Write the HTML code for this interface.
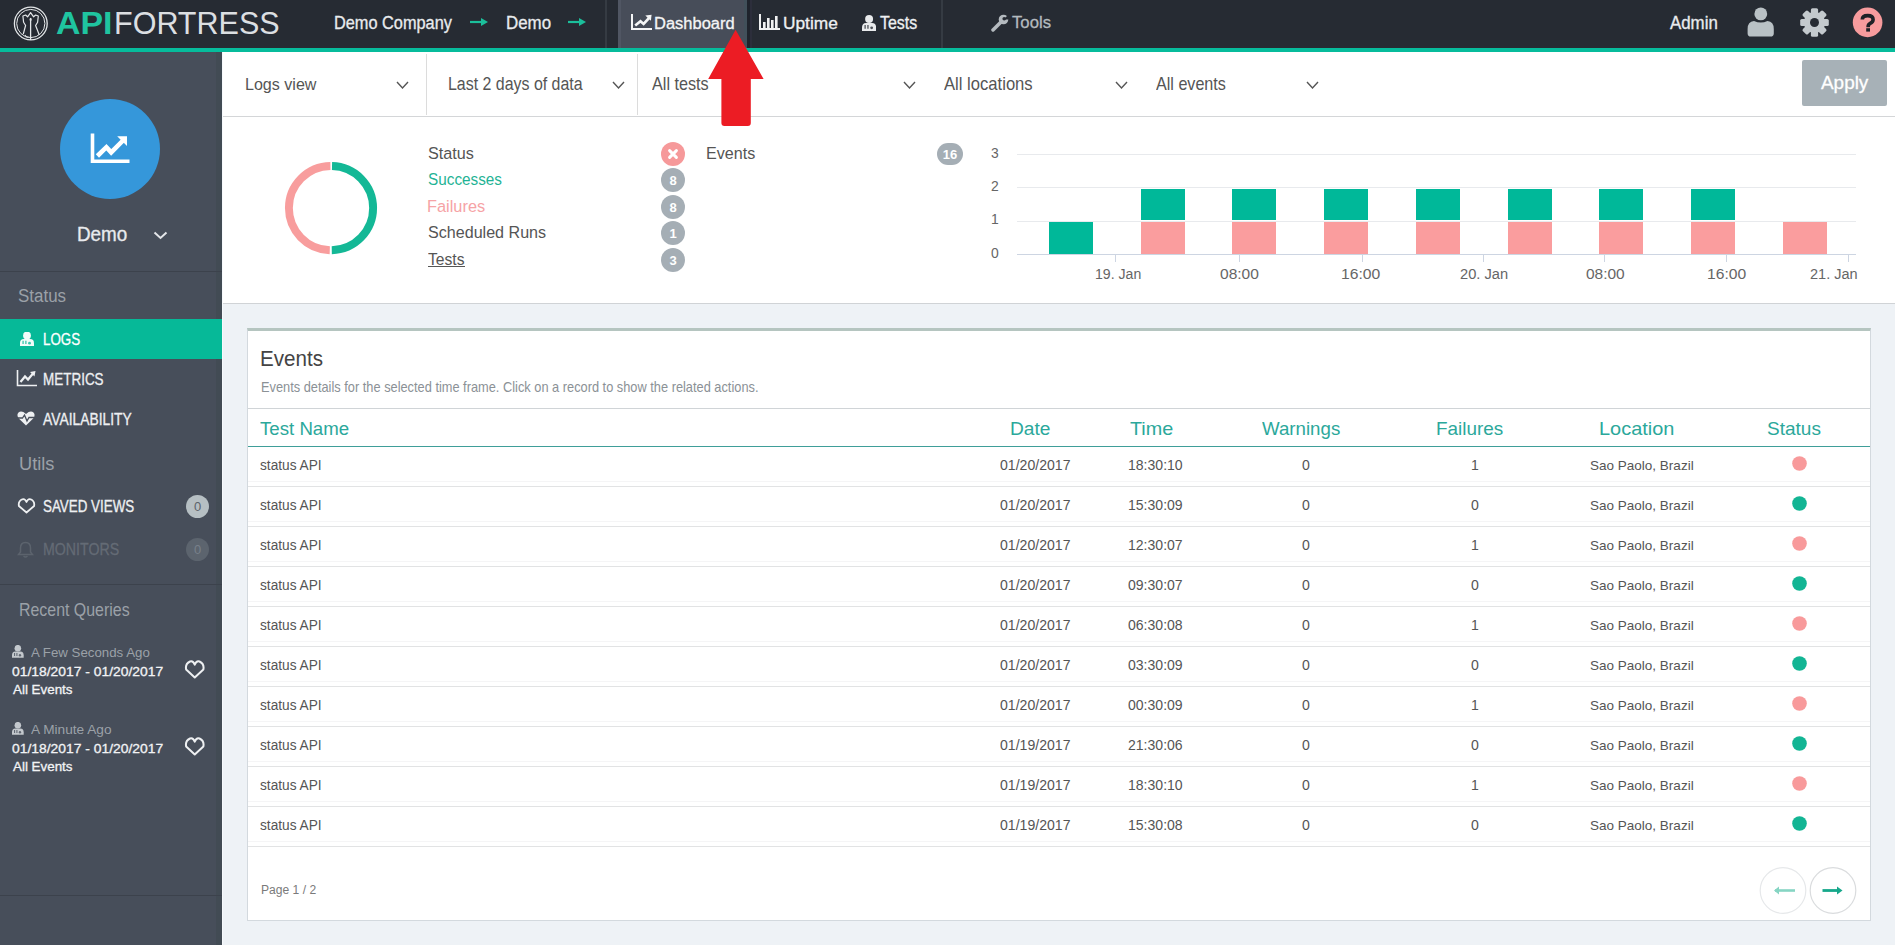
<!DOCTYPE html>
<html><head><meta charset="utf-8">
<style>
*{box-sizing:border-box;margin:0;padding:0}
html,body{width:1895px;height:945px;overflow:hidden;background:#eef2f6;font-family:"Liberation Sans",sans-serif;color:#555}
.a{position:absolute;white-space:nowrap}
.b{position:absolute;display:block}
</style></head><body>
<div class="b" style="left:0px;top:0px;width:1895px;height:48px;background:#262b33;"></div>
<div class="b" style="left:0px;top:48px;width:1895px;height:4.5px;background:#06bc9c;"></div>
<div class="b" style="left:0px;top:52px;width:222px;height:893px;background:#474e5a;"></div>
<div class="b" style="left:222px;top:52px;width:1673px;height:64px;background:#fff;"></div>
<div class="b" style="left:222px;top:116px;width:1673px;height:1px;background:#d4d6d8;"></div>
<div class="b" style="left:222px;top:117px;width:1673px;height:186px;background:#fff;"></div>
<div class="b" style="left:222px;top:303px;width:1673px;height:1px;background:#d0d3d6;"></div>
<svg class="b" style="left:12px;top:5px;" width="38" height="38" viewBox="0 0 38 38"><circle cx="18.8" cy="18.5" r="16.4" fill="none" stroke="#e3e6e8" stroke-width="1.3"/><circle cx="18.8" cy="18.5" r="14.1" fill="none" stroke="#e3e6e8" stroke-width="1"/><path d="M11.3 29 L13.6 20.5 L11.6 17.2 L10.9 11 L13.6 10 L15.6 11.8 L18.6 7.6 L21.6 11.8 L23.6 10 L26.3 11 L25.6 17.2 L23.6 20.5 L27.3 30" fill="none" stroke="#e3e6e8" stroke-width="1.2" stroke-linejoin="round"/><path d="M18.6 13.5 L18.6 35" stroke="#e3e6e8" stroke-width="1.3"/><ellipse cx="18.6" cy="14.4" rx="1" ry="1.6" fill="#e3e6e8"/><path d="M13 30 Q15 33 16.5 32" fill="none" stroke="#e3e6e8" stroke-width="1.1"/></svg>
<div class="a" style="left:55.75px;top:8.40px;font-size:31.01px;line-height:31.01px;color:#1fc4a0;transform:scaleX(1.0932);transform-origin:0 0;font-weight:700;">API</div>
<div class="a" style="left:113.56px;top:8.40px;font-size:30.57px;line-height:30.57px;color:#dcdfe2;transform:scaleX(0.9986);transform-origin:0 0;">FORTRESS</div>
<div class="a" style="left:333.69px;top:15.20px;font-size:17.86px;line-height:17.86px;color:#e9ebee;transform:scaleX(0.9137);transform-origin:0 0;-webkit-text-stroke:0.3px #e9ebee;">Demo Company</div>
<svg class="b" style="left:470px;top:17px;" width="20" height="10" viewBox="0 0 20 10"><path d="M0 5 L13 5" stroke="#1bbf9b" stroke-width="2.2"/><path d="M11 1 L18 5 L11 9 Z" fill="#1bbf9b"/></svg>
<div class="a" style="left:505.65px;top:14.20px;font-size:18.12px;line-height:18.12px;color:#e9ebee;transform:scaleX(0.9327);transform-origin:0 0;-webkit-text-stroke:0.3px #e9ebee;">Demo</div>
<svg class="b" style="left:568px;top:17px;" width="20" height="10" viewBox="0 0 20 10"><path d="M0 5 L13 5" stroke="#1bbf9b" stroke-width="2.2"/><path d="M11 1 L18 5 L11 9 Z" fill="#1bbf9b"/></svg>
<div class="b" style="left:605px;top:0px;width:2px;height:48px;background:#353b43;"></div>
<div class="b" style="left:618px;top:0px;width:126px;height:48px;background:#474d59;"></div>
<div class="b" style="left:618px;top:0px;width:3px;height:48px;background:#505663;"></div>
<div class="b" style="left:744px;top:0px;width:3px;height:48px;background:#41505a;"></div>
<div class="b" style="left:747px;top:0px;width:3px;height:48px;background:#1f242d;"></div>
<div class="b" style="left:750px;top:0px;width:2px;height:48px;background:#2c2e3b;"></div>
<svg class="b" style="left:631px;top:14px;" width="21" height="16" viewBox="0 0 21 16"><path d="M1 0 L1 15 L21 15" fill="none" stroke="#f4f5f6" stroke-width="2"/><path d="M4.2 11.5 L9.5 7.2 L12.6 9.9 L18.5 3.5" fill="none" stroke="#f4f5f6" stroke-width="2.6"/><path d="M14.3 1.6 L20.6 0.8 L19.9 6.7 Z" fill="#f4f5f6"/></svg>
<div class="a" style="left:654.38px;top:14.80px;font-size:16.41px;line-height:16.41px;color:#f4f5f6;transform:scaleX(1.0053);transform-origin:0 0;-webkit-text-stroke:0.3px #f4f5f6;">Dashboard</div>
<svg class="b" style="left:759px;top:14px;" width="21" height="16" viewBox="0 0 21 16"><path d="M1 0 L1 15 L21 15" fill="none" stroke="#f0f1f2" stroke-width="2"/><rect x="4" y="8" width="2.6" height="6" fill="#f0f1f2"/><rect x="8" y="4" width="2.6" height="10" fill="#f0f1f2"/><rect x="12" y="6" width="2.6" height="8" fill="#f0f1f2"/><rect x="16" y="2" width="2.6" height="12" fill="#f0f1f2"/></svg>
<div class="a" style="left:782.50px;top:15.50px;font-size:16.00px;line-height:16.00px;color:#eef0f2;transform:scaleX(1.0817);transform-origin:0 0;-webkit-text-stroke:0.3px #eef0f2;">Uptime</div>
<svg class="b" style="left:861.8px;top:14.5px;" width="14.2" height="16" viewBox="0 0 14.2 16"><circle cx="7.10" cy="4.00" r="3.98" fill="#e8eaec"/><path d="M0 16 L0 12.80 Q0 8.00 3.98 8.00 L10.22 8.00 Q14.2 8.00 14.2 12.80 L14.2 16 Z" fill="#e8eaec"/><path d="M3.12 9.92 L3.12 13.76 M5.96 9.92 L5.96 13.76" stroke="#262b33" stroke-width="1.28" opacity="0.8"/><circle cx="9.66" cy="12.80" r="1.42" fill="#262b33" opacity="0.8"/></svg>
<div class="a" style="left:879.58px;top:15.00px;font-size:17.83px;line-height:17.83px;color:#eef0f2;transform:scaleX(0.8931);transform-origin:0 0;-webkit-text-stroke:0.3px #eef0f2;">Tests</div>
<div class="b" style="left:940.5px;top:0px;width:2px;height:48px;background:#353b43;"></div>
<svg class="b" style="left:991px;top:14px;" width="18" height="18" viewBox="0 0 18 18"><path d="M2 16 L10 8" stroke="#b4babf" stroke-width="3.5" stroke-linecap="round"/><circle cx="12.5" cy="5.5" r="4.8" fill="#b4babf"/><path d="M12.5 5.5 L18 0 L18 5.5 Z" fill="#262b33"/><circle cx="13.2" cy="4.8" r="1.8" fill="#262b33"/></svg>
<div class="a" style="left:1012.37px;top:14.40px;font-size:16.28px;line-height:16.28px;color:#b4babf;transform:scaleX(1.0267);transform-origin:0 0;-webkit-text-stroke:0.3px #b4babf;">Tools</div>
<div class="a" style="left:1670.22px;top:15.30px;font-size:17.52px;line-height:17.52px;color:#e9ebee;transform:scaleX(0.9621);transform-origin:0 0;-webkit-text-stroke:0.3px #e9ebee;">Admin</div>
<svg class="b" style="left:1747px;top:7px;" width="28" height="30" viewBox="0 0 28 30"><circle cx="13.8" cy="6.9" r="6.4" fill="#b9c1c5"/><path d="M0.6 26.5 L0.6 22 Q0.6 14.5 7 14 Q13.8 17.2 20.5 14 Q26.8 14.5 26.8 22 L26.8 26.5 Q26.8 29.6 23.5 29.6 L3.9 29.6 Q0.6 29.6 0.6 26.5 Z" fill="#b9c1c5"/></svg>
<svg class="b" style="left:1800px;top:7.5px;" width="29" height="29" viewBox="0 0 29 29"><rect x="10.9" y="0.2" width="7.2" height="9" rx="1.6" fill="#c3c9cd" transform="rotate(0 14.5 14.5)"/><rect x="10.9" y="0.2" width="7.2" height="9" rx="1.6" fill="#c3c9cd" transform="rotate(45 14.5 14.5)"/><rect x="10.9" y="0.2" width="7.2" height="9" rx="1.6" fill="#c3c9cd" transform="rotate(90 14.5 14.5)"/><rect x="10.9" y="0.2" width="7.2" height="9" rx="1.6" fill="#c3c9cd" transform="rotate(135 14.5 14.5)"/><rect x="10.9" y="0.2" width="7.2" height="9" rx="1.6" fill="#c3c9cd" transform="rotate(180 14.5 14.5)"/><rect x="10.9" y="0.2" width="7.2" height="9" rx="1.6" fill="#c3c9cd" transform="rotate(225 14.5 14.5)"/><rect x="10.9" y="0.2" width="7.2" height="9" rx="1.6" fill="#c3c9cd" transform="rotate(270 14.5 14.5)"/><rect x="10.9" y="0.2" width="7.2" height="9" rx="1.6" fill="#c3c9cd" transform="rotate(315 14.5 14.5)"/><circle cx="14.5" cy="14.5" r="10.6" fill="#c3c9cd"/><circle cx="14.5" cy="14.5" r="4.5" fill="#262b33"/></svg>
<svg class="b" style="left:1852px;top:7px;" width="31" height="31" viewBox="0 0 31 31"><circle cx="15.6" cy="15.4" r="14.8" fill="#f79b9d"/><path d="M10.3 12.4 Q10.3 8.6 15.7 8.6 Q21.1 8.6 21.1 12.4 Q21.1 15 18.2 16.4 Q16.1 17.4 16.1 20.2" fill="none" stroke="#1e2126" stroke-width="3.6"/><rect x="14.2" y="21.2" width="3.8" height="3.4" fill="#1e2126"/></svg>
<div class="b" style="left:216px;top:52px;width:6px;height:893px;background:#424b54;"></div>
<div class="b" style="left:222px;top:52px;width:1px;height:893px;background:#f6f9fc;"></div>
<svg class="b" style="left:60px;top:98.5px;" width="100" height="100" viewBox="0 0 100 100"><circle cx="50" cy="50" r="50" fill="#3597da"/></svg>
<svg class="b" style="left:90px;top:132px;" width="41" height="32" viewBox="0 0 41 32"><path d="M2.5 1.6 L2.5 29.2 L39.5 29.2" fill="none" stroke="#fff" stroke-width="3.6"/><path d="M7.4 24 L16.4 15.2 L21.2 20.4 L33.5 8" fill="none" stroke="#fff" stroke-width="4.6" stroke-linejoin="miter"/><path d="M27.2 4.3 L37 4.2 L37 14 Z" fill="#fff"/></svg>
<div class="a" style="left:76.99px;top:225.00px;font-size:19.42px;line-height:19.42px;color:#e9ebee;transform:scaleX(0.9712);transform-origin:0 0;-webkit-text-stroke:0.3px #e9ebee;">Demo</div>
<svg class="b" style="left:153px;top:231px;" width="15" height="9" viewBox="0 0 15 9"><path d="M1.5 1.5 L7.5 7 L13.5 1.5" fill="none" stroke="#e4e6e9" stroke-width="2"/></svg>
<div class="b" style="left:0px;top:271px;width:222px;height:1px;background:#3c424c;"></div>
<div class="a" style="left:18.24px;top:288.30px;font-size:17.57px;line-height:17.57px;color:#9ba1a8;transform:scaleX(0.9647);transform-origin:0 0;">Status</div>
<div class="b" style="left:0px;top:319px;width:222px;height:40px;background:#06b998;"></div>
<svg class="b" style="left:19.5px;top:332px;" width="14" height="14" viewBox="0 0 14 14"><circle cx="7.00" cy="3.50" r="3.92" fill="#f2fbf9"/><path d="M0 14 L0 11.20 Q0 7.00 3.92 7.00 L10.08 7.00 Q14 7.00 14 11.20 L14 14 Z" fill="#f2fbf9"/><path d="M3.08 8.68 L3.08 12.04 M5.88 8.68 L5.88 12.04" stroke="#06b998" stroke-width="1.26" opacity="0.8"/><circle cx="9.52" cy="11.20" r="1.40" fill="#06b998" opacity="0.8"/></svg>
<div class="a" style="left:43.03px;top:332.40px;font-size:15.86px;line-height:15.86px;color:#ffffff;transform:scaleX(0.8448);transform-origin:0 0;-webkit-text-stroke:0.3px #ffffff;">LOGS</div>
<svg class="b" style="left:16px;top:370px;" width="21" height="17" viewBox="0 0 21 17"><path d="M1.5 0 L1.5 15.5 L21 15.5" fill="none" stroke="#eef0f2" stroke-width="1.6"/><path d="M4.5 12 L9 6.5 L12 9.5 L17 3.5" fill="none" stroke="#eef0f2" stroke-width="2.2"/><path d="M14 2 L19.5 1 L18.5 6.5 Z" fill="#eef0f2"/></svg>
<div class="a" style="left:42.92px;top:372.00px;font-size:15.86px;line-height:15.86px;color:#eef0f2;transform:scaleX(0.8490);transform-origin:0 0;-webkit-text-stroke:0.3px #eef0f2;">METRICS</div>
<svg class="b" style="left:17px;top:411px;" width="18" height="15" viewBox="0 0 18 15"><path d="M9 14.5 L1.8 7.5 Q-0.8 4 1.5 1.5 Q4.5 -1 9 3 Q13.5 -1 16.5 1.5 Q18.8 4 16.2 7.5 Z" fill="#eef0f2"/><path d="M1 7 L5.5 7 L7.5 4 L10 10 L12 6.5 L17 6.5" fill="none" stroke="#474e5a" stroke-width="1.3"/></svg>
<div class="a" style="left:43.43px;top:411.10px;font-size:16.09px;line-height:16.09px;color:#eef0f2;transform:scaleX(0.8616);transform-origin:0 0;-webkit-text-stroke:0.3px #eef0f2;">AVAILABILITY</div>
<div class="a" style="left:18.93px;top:454.10px;font-size:19.17px;line-height:19.17px;color:#9ba1a8;transform:scaleX(0.9494);transform-origin:0 0;">Utils</div>
<svg class="b" style="left:17px;top:498px;" width="19" height="16" viewBox="0 0 19 16"><path d="M9.5 14.5 L1.9000000000000001 8.0 Q1 3.2 5.32 1.28 Q7.9799999999999995 0.32 9.5 4.0 Q11.02 0.32 13.68 1.28 Q18 3.2 17.1 8.0 Z" fill="none" stroke="#eef0f2" stroke-width="1.8" stroke-linejoin="round"/></svg>
<div class="a" style="left:43.10px;top:498.80px;font-size:16.00px;line-height:16.00px;color:#eef0f2;transform:scaleX(0.8364);transform-origin:0 0;-webkit-text-stroke:0.3px #eef0f2;">SAVED VIEWS</div>
<svg class="b" style="left:185.5px;top:495px;" width="23" height="23" viewBox="0 0 23 23"><circle cx="11.5" cy="11.5" r="11.5" fill="#b6bfc3"/><text x="11.5" y="16.2" text-anchor="middle" font-family="Liberation Sans" font-size="13" fill="#5c636b">0</text></svg>
<svg class="b" style="left:17px;top:541px;" width="17" height="17" viewBox="0 0 17 17"><path d="M8.5 1.5 Q3.5 1.5 3.5 7 L3.5 11 L1.5 13.5 L15.5 13.5 L13.5 11 L13.5 7 Q13.5 1.5 8.5 1.5 Z" fill="none" stroke="#5c636d" stroke-width="1.5"/><path d="M6.5 15 Q8.5 17 10.5 15" fill="none" stroke="#5c636d" stroke-width="1.3"/></svg>
<div class="a" style="left:42.97px;top:542.40px;font-size:16.00px;line-height:16.00px;color:#646b75;transform:scaleX(0.8866);transform-origin:0 0;-webkit-text-stroke:0.3px #646b75;">MONITORS</div>
<svg class="b" style="left:185.5px;top:538px;" width="23" height="23" viewBox="0 0 23 23"><circle cx="11.5" cy="11.5" r="11.5" fill="#5c646e"/><text x="11.5" y="16.2" text-anchor="middle" font-family="Liberation Sans" font-size="13" fill="#78808a">0</text></svg>
<div class="b" style="left:0px;top:584px;width:222px;height:1px;background:#3c424c;"></div>
<div class="a" style="left:19.33px;top:601.60px;font-size:17.66px;line-height:17.66px;color:#9ba1a8;transform:scaleX(0.9016);transform-origin:0 0;">Recent Queries</div>
<svg class="b" style="left:12.2px;top:645px;" width="11.7" height="12.8" viewBox="0 0 11.7 12.8"><circle cx="5.85" cy="3.20" r="3.28" fill="#c3c8cd"/><path d="M0 12.8 L0 10.24 Q0 6.40 3.28 6.40 L8.42 6.40 Q11.7 6.40 11.7 10.24 L11.7 12.8 Z" fill="#c3c8cd"/><path d="M2.57 7.94 L2.57 11.01 M4.91 7.94 L4.91 11.01" stroke="#474e5a" stroke-width="1.05" opacity="0.8"/><circle cx="7.96" cy="10.24" r="1.17" fill="#474e5a" opacity="0.8"/></svg>
<div class="a" style="left:31.03px;top:645.70px;font-size:13.10px;line-height:13.10px;color:#9ba1a8;transform:scaleX(1.0138);transform-origin:0 0;">A Few Seconds Ago</div>
<div class="a" style="left:12.24px;top:664.60px;font-size:13.10px;line-height:13.10px;color:#f2f3f5;transform:scaleX(1.0590);transform-origin:0 0;-webkit-text-stroke:0.3px #f2f3f5;">01/18/2017 - 01/20/2017</div>
<div class="a" style="left:13.23px;top:684.40px;font-size:12.97px;line-height:12.97px;color:#f2f3f5;transform:scaleX(1.0313);transform-origin:0 0;-webkit-text-stroke:0.3px #f2f3f5;">All Events</div>
<svg class="b" style="left:184.2px;top:660px;" width="21.5" height="19" viewBox="0 0 21.5 19"><path d="M10.75 17.5 L2.15 9.5 Q1 3.8000000000000003 6.0200000000000005 1.52 Q9.03 0.38 10.75 4.75 Q12.469999999999999 0.38 15.479999999999999 1.52 Q20.5 3.8000000000000003 19.35 9.5 Z" fill="none" stroke="#eef0f2" stroke-width="2" stroke-linejoin="round"/></svg>
<svg class="b" style="left:12.2px;top:722px;" width="11.7" height="12.8" viewBox="0 0 11.7 12.8"><circle cx="5.85" cy="3.20" r="3.28" fill="#c3c8cd"/><path d="M0 12.8 L0 10.24 Q0 6.40 3.28 6.40 L8.42 6.40 Q11.7 6.40 11.7 10.24 L11.7 12.8 Z" fill="#c3c8cd"/><path d="M2.57 7.94 L2.57 11.01 M4.91 7.94 L4.91 11.01" stroke="#474e5a" stroke-width="1.05" opacity="0.8"/><circle cx="7.96" cy="10.24" r="1.17" fill="#474e5a" opacity="0.8"/></svg>
<div class="a" style="left:31.03px;top:722.70px;font-size:13.10px;line-height:13.10px;color:#9ba1a8;transform:scaleX(1.0432);transform-origin:0 0;">A Minute Ago</div>
<div class="a" style="left:12.24px;top:741.60px;font-size:13.10px;line-height:13.10px;color:#f2f3f5;transform:scaleX(1.0590);transform-origin:0 0;-webkit-text-stroke:0.3px #f2f3f5;">01/18/2017 - 01/20/2017</div>
<div class="a" style="left:13.23px;top:761.40px;font-size:12.97px;line-height:12.97px;color:#f2f3f5;transform:scaleX(1.0313);transform-origin:0 0;-webkit-text-stroke:0.3px #f2f3f5;">All Events</div>
<svg class="b" style="left:184.2px;top:737px;" width="21.5" height="19" viewBox="0 0 21.5 19"><path d="M10.75 17.5 L2.15 9.5 Q1 3.8000000000000003 6.0200000000000005 1.52 Q9.03 0.38 10.75 4.75 Q12.469999999999999 0.38 15.479999999999999 1.52 Q20.5 3.8000000000000003 19.35 9.5 Z" fill="none" stroke="#eef0f2" stroke-width="2" stroke-linejoin="round"/></svg>
<div class="b" style="left:0px;top:895px;width:222px;height:1px;background:#3c424c;"></div>
<div class="a" style="left:245.31px;top:75.70px;font-size:17.38px;line-height:17.38px;color:#555;transform:scaleX(0.9256);transform-origin:0 0;">Logs view</div>
<svg class="b" style="left:395.5px;top:80.5px;" width="13" height="9" viewBox="0 0 13 9"><path d="M1 1 L6.5 7 L12 1" fill="none" stroke="#555" stroke-width="1.4"/></svg>
<div class="b" style="left:426px;top:54px;width:1px;height:61px;background:#dcdcdc;"></div>
<div class="a" style="left:448.13px;top:75.90px;font-size:17.66px;line-height:17.66px;color:#555;transform:scaleX(0.9021);transform-origin:0 0;">Last 2 days of data</div>
<svg class="b" style="left:612px;top:80.5px;" width="13" height="9" viewBox="0 0 13 9"><path d="M1 1 L6.5 7 L12 1" fill="none" stroke="#555" stroke-width="1.4"/></svg>
<div class="b" style="left:637px;top:54px;width:1px;height:61px;background:#dcdcdc;"></div>
<div class="a" style="left:652.32px;top:75.80px;font-size:17.52px;line-height:17.52px;color:#555;transform:scaleX(0.9239);transform-origin:0 0;">All tests</div>
<svg class="b" style="left:902.5px;top:80.5px;" width="13" height="9" viewBox="0 0 13 9"><path d="M1 1 L6.5 7 L12 1" fill="none" stroke="#555" stroke-width="1.4"/></svg>
<div class="a" style="left:943.82px;top:75.80px;font-size:17.52px;line-height:17.52px;color:#555;transform:scaleX(0.9487);transform-origin:0 0;">All locations</div>
<svg class="b" style="left:1115px;top:80.5px;" width="13" height="9" viewBox="0 0 13 9"><path d="M1 1 L6.5 7 L12 1" fill="none" stroke="#555" stroke-width="1.4"/></svg>
<div class="a" style="left:1155.72px;top:75.80px;font-size:17.52px;line-height:17.52px;color:#555;transform:scaleX(0.9198);transform-origin:0 0;">All events</div>
<svg class="b" style="left:1306px;top:80.5px;" width="13" height="9" viewBox="0 0 13 9"><path d="M1 1 L6.5 7 L12 1" fill="none" stroke="#555" stroke-width="1.4"/></svg>
<div class="b" style="left:1802px;top:60px;width:85px;height:46px;background:#a7b1b7;border-radius:2px;"></div>
<div class="a" style="left:1821.11px;top:73.50px;font-size:18.90px;line-height:18.90px;color:#ffffff;transform:scaleX(1.0010);transform-origin:0 0;-webkit-text-stroke:0.3px #fff;">Apply</div>
<svg class="b" style="left:280px;top:158px;" width="102" height="102" viewBox="0 0 102 102"><circle cx="51" cy="50.1" r="42.1" fill="none" stroke="#14b896" stroke-width="7.9" stroke-dasharray="130.2 134.3" stroke-dashoffset="-1.05" transform="rotate(-90 51 50.1)"/><circle cx="51" cy="50.1" r="42.1" fill="none" stroke="#f89d9d" stroke-width="7.9" stroke-dasharray="130.2 134.3" stroke-dashoffset="-133.3" transform="rotate(-90 51 50.1)"/></svg>
<div class="a" style="left:427.57px;top:145.60px;font-size:16.71px;line-height:16.71px;color:#555;transform:scaleX(0.9707);transform-origin:0 0;">Status</div>
<div class="a" style="left:427.61px;top:171.70px;font-size:16.71px;line-height:16.71px;color:#1fb395;transform:scaleX(0.9173);transform-origin:0 0;">Successes</div>
<div class="a" style="left:426.99px;top:197.50px;font-size:17.10px;line-height:17.10px;color:#f6a3a6;transform:scaleX(0.9569);transform-origin:0 0;">Failures</div>
<div class="a" style="left:427.58px;top:223.70px;font-size:17.10px;line-height:17.10px;color:#555;transform:scaleX(0.9414);transform-origin:0 0;">Scheduled Runs</div>
<div class="a" style="left:427.99px;top:251.50px;font-size:16.96px;line-height:16.96px;color:#555;transform:scaleX(0.9234);transform-origin:0 0;">Tests</div>
<div class="b" style="left:428px;top:265.5px;width:37px;height:1.2px;background:#555;"></div>
<svg class="b" style="left:661px;top:141.7px;" width="24" height="24" viewBox="0 0 24 24"><circle cx="12" cy="12" r="12" fill="#f6999a"/><path d="M8.6 8.6 L15.4 15.4 M15.4 8.6 L8.6 15.4" stroke="#fff" stroke-width="3" stroke-linecap="round"/></svg>
<svg class="b" style="left:661.0px;top:168.3px;" width="24" height="24" viewBox="0 0 24 24"><rect x="0" y="0" width="24" height="24" rx="12.0" fill="#a5aeb5"/><text x="12.0" y="16.6" text-anchor="middle" font-family="Liberation Sans" font-weight="700" font-size="13" fill="#fff">8</text></svg>
<svg class="b" style="left:661.0px;top:194.9px;" width="24" height="24" viewBox="0 0 24 24"><rect x="0" y="0" width="24" height="24" rx="12.0" fill="#a5aeb5"/><text x="12.0" y="16.6" text-anchor="middle" font-family="Liberation Sans" font-weight="700" font-size="13" fill="#fff">8</text></svg>
<svg class="b" style="left:661.0px;top:221.3px;" width="24" height="24" viewBox="0 0 24 24"><rect x="0" y="0" width="24" height="24" rx="12.0" fill="#a5aeb5"/><text x="12.0" y="16.6" text-anchor="middle" font-family="Liberation Sans" font-weight="700" font-size="13" fill="#fff">1</text></svg>
<svg class="b" style="left:661.0px;top:247.7px;" width="24" height="24" viewBox="0 0 24 24"><rect x="0" y="0" width="24" height="24" rx="12.0" fill="#a5aeb5"/><text x="12.0" y="16.6" text-anchor="middle" font-family="Liberation Sans" font-weight="700" font-size="13" fill="#fff">3</text></svg>
<div class="a" style="left:706.31px;top:145.60px;font-size:16.96px;line-height:16.96px;color:#555;transform:scaleX(0.9508);transform-origin:0 0;">Events</div>
<svg class="b" style="left:937.2px;top:142.9px;" width="26" height="22" viewBox="0 0 26 22"><rect x="0" y="0" width="26" height="22" rx="11.0" fill="#a5aeb5"/><text x="13.0" y="15.6" text-anchor="middle" font-family="Liberation Sans" font-weight="700" font-size="13" fill="#fff">16</text></svg>
<div class="a" style="left:991.18px;top:145.90px;font-size:14.29px;line-height:14.29px;color:#666;transform:scaleX(0.9730);transform-origin:0 0;">3</div>
<div class="a" style="left:991.14px;top:178.80px;font-size:14.00px;line-height:14.00px;color:#666;transform:scaleX(0.9929);transform-origin:0 0;">2</div>
<div class="a" style="left:990.93px;top:211.60px;font-size:14.20px;line-height:14.20px;color:#666;transform:scaleX(0.9787);transform-origin:0 0;">1</div>
<div class="a" style="left:991.14px;top:246.70px;font-size:13.86px;line-height:13.86px;color:#666;transform:scaleX(1.0031);transform-origin:0 0;">0</div>
<div class="b" style="left:1017px;top:153.5px;width:839px;height:1px;background:#e8eaed;"></div>
<div class="b" style="left:1017px;top:187px;width:839px;height:1px;background:#e8eaed;"></div>
<div class="b" style="left:1017px;top:220.5px;width:839px;height:1px;background:#e8eaed;"></div>
<div class="b" style="left:1017px;top:253.5px;width:839px;height:1.2px;background:#cdd5e2;"></div>
<div class="b" style="left:1115.3px;top:254px;width:1px;height:8px;background:#cdd5e2;"></div>
<div class="a" style="left:1094.64px;top:265.60px;font-size:15.14px;line-height:15.14px;color:#666;transform:scaleX(0.9317);transform-origin:0 0;">19. Jan</div>
<div class="b" style="left:1238.5px;top:254px;width:1px;height:8px;background:#cdd5e2;"></div>
<div class="a" style="left:1219.78px;top:265.60px;font-size:15.14px;line-height:15.14px;color:#666;transform:scaleX(1.0260);transform-origin:0 0;">08:00</div>
<div class="b" style="left:1361.5px;top:254px;width:1px;height:8px;background:#cdd5e2;"></div>
<div class="a" style="left:1341.32px;top:265.60px;font-size:15.14px;line-height:15.14px;color:#666;transform:scaleX(1.0383);transform-origin:0 0;">16:00</div>
<div class="b" style="left:1483.0px;top:254px;width:1px;height:8px;background:#cdd5e2;"></div>
<div class="a" style="left:1459.87px;top:265.60px;font-size:15.14px;line-height:15.14px;color:#666;transform:scaleX(0.9681);transform-origin:0 0;">20. Jan</div>
<div class="b" style="left:1604.1px;top:254px;width:1px;height:8px;background:#cdd5e2;"></div>
<div class="a" style="left:1585.88px;top:265.60px;font-size:15.14px;line-height:15.14px;color:#666;transform:scaleX(1.0233);transform-origin:0 0;">08:00</div>
<div class="b" style="left:1726.1px;top:254px;width:1px;height:8px;background:#cdd5e2;"></div>
<div class="a" style="left:1707.42px;top:265.60px;font-size:15.14px;line-height:15.14px;color:#666;transform:scaleX(1.0356);transform-origin:0 0;">16:00</div>
<div class="b" style="left:1848.2px;top:254px;width:1px;height:8px;background:#cdd5e2;"></div>
<div class="a" style="left:1810.27px;top:265.60px;font-size:15.14px;line-height:15.14px;color:#666;transform:scaleX(0.9598);transform-origin:0 0;">21. Jan</div>
<div class="b" style="left:1049.0px;top:222px;width:44px;height:32px;background:#00b899;"></div>
<div class="b" style="left:1140.7px;top:189px;width:44px;height:31px;background:#00b899;"></div>
<div class="b" style="left:1140.7px;top:222px;width:44px;height:32px;background:#fa9d9e;"></div>
<div class="b" style="left:1232.4px;top:189px;width:44px;height:31px;background:#00b899;"></div>
<div class="b" style="left:1232.4px;top:222px;width:44px;height:32px;background:#fa9d9e;"></div>
<div class="b" style="left:1324.1px;top:189px;width:44px;height:31px;background:#00b899;"></div>
<div class="b" style="left:1324.1px;top:222px;width:44px;height:32px;background:#fa9d9e;"></div>
<div class="b" style="left:1415.8px;top:189px;width:44px;height:31px;background:#00b899;"></div>
<div class="b" style="left:1415.8px;top:222px;width:44px;height:32px;background:#fa9d9e;"></div>
<div class="b" style="left:1507.5px;top:189px;width:44px;height:31px;background:#00b899;"></div>
<div class="b" style="left:1507.5px;top:222px;width:44px;height:32px;background:#fa9d9e;"></div>
<div class="b" style="left:1599.2px;top:189px;width:44px;height:31px;background:#00b899;"></div>
<div class="b" style="left:1599.2px;top:222px;width:44px;height:32px;background:#fa9d9e;"></div>
<div class="b" style="left:1690.9px;top:189px;width:44px;height:31px;background:#00b899;"></div>
<div class="b" style="left:1690.9px;top:222px;width:44px;height:32px;background:#fa9d9e;"></div>
<div class="b" style="left:1782.6px;top:222px;width:44px;height:32px;background:#fa9d9e;"></div>
<div class="b" style="left:247px;top:328px;width:1624px;height:593px;background:#fff;border:1px solid #d3d9de;border-top:3px solid #b5c5c0;"></div>
<div class="a" style="left:260.25px;top:348.90px;font-size:21.45px;line-height:21.45px;color:#444;transform:scaleX(0.9610);transform-origin:0 0;">Events</div>
<div class="a" style="left:260.87px;top:380.70px;font-size:13.79px;line-height:13.79px;color:#8b9196;transform:scaleX(0.9291);transform-origin:0 0;">Events details for the selected time frame. Click on a record to show the related actions.</div>
<div class="b" style="left:248px;top:408px;width:1622px;height:1px;background:#d0d4d7;"></div>
<div class="a" style="left:259.63px;top:419.80px;font-size:18.26px;line-height:18.26px;color:#2ba89b;transform:scaleX(1.0221);transform-origin:0 0;">Test Name</div>
<div class="a" style="left:1010.27px;top:419.60px;font-size:18.70px;line-height:18.70px;color:#2ba89b;transform:scaleX(1.0240);transform-origin:0 0;">Date</div>
<div class="a" style="left:1129.60px;top:420.60px;font-size:17.79px;line-height:17.79px;color:#2ba89b;transform:scaleX(1.1134);transform-origin:0 0;">Time</div>
<div class="a" style="left:1262.31px;top:420.60px;font-size:17.79px;line-height:17.79px;color:#2ba89b;transform:scaleX(1.0508);transform-origin:0 0;">Warnings</div>
<div class="a" style="left:1436.09px;top:420.60px;font-size:17.79px;line-height:17.79px;color:#2ba89b;transform:scaleX(1.0636);transform-origin:0 0;">Failures</div>
<div class="a" style="left:1598.80px;top:420.60px;font-size:17.79px;line-height:17.79px;color:#2ba89b;transform:scaleX(1.1209);transform-origin:0 0;">Location</div>
<div class="a" style="left:1767.14px;top:419.60px;font-size:18.43px;line-height:18.43px;color:#2ba89b;transform:scaleX(1.0321);transform-origin:0 0;">Status</div>
<div class="b" style="left:248px;top:446px;width:1622px;height:1.3px;background:#3f9e99;"></div>
<div class="a" style="left:259.59px;top:458.00px;font-size:14.49px;line-height:14.49px;color:#555;transform:scaleX(0.9452);transform-origin:0 0;">status API</div>
<div class="a" style="left:999.94px;top:458.00px;font-size:14.14px;line-height:14.14px;color:#555;transform:scaleX(0.9973);transform-origin:0 0;">01/20/2017</div>
<div class="a" style="left:1128.11px;top:458.00px;font-size:14.64px;line-height:14.64px;color:#555;transform:scaleX(0.9600);transform-origin:0 0;">18:30:10</div>
<div class="a" style="left:1302.14px;top:458.00px;font-size:14.64px;line-height:14.64px;color:#555;transform:scaleX(0.9633);transform-origin:0 0;">0</div>
<div class="a" style="left:1471.25px;top:458.00px;font-size:14.86px;line-height:14.86px;color:#555;transform:scaleX(0.9440);transform-origin:0 0;">1</div>
<div class="a" style="left:1589.69px;top:458.90px;font-size:13.24px;line-height:13.24px;color:#555;transform:scaleX(1.0209);transform-origin:0 0;">Sao Paolo, Brazil</div>
<svg class="b" style="left:1792px;top:456px;" width="15" height="15" viewBox="0 0 15 15"><circle cx="7.5" cy="7.5" r="7.3" fill="#f89a9b"/></svg>
<div class="b" style="left:248px;top:481px;width:1622px;height:1px;background:#f5f5f6;"></div>
<div class="b" style="left:248px;top:486px;width:1622px;height:1px;background:#e2e3e4;"></div>
<div class="a" style="left:259.59px;top:498.00px;font-size:14.49px;line-height:14.49px;color:#555;transform:scaleX(0.9452);transform-origin:0 0;">status API</div>
<div class="a" style="left:999.94px;top:498.00px;font-size:14.14px;line-height:14.14px;color:#555;transform:scaleX(0.9973);transform-origin:0 0;">01/20/2017</div>
<div class="a" style="left:1128.15px;top:498.00px;font-size:14.64px;line-height:14.64px;color:#555;transform:scaleX(0.9600);transform-origin:0 0;">15:30:09</div>
<div class="a" style="left:1302.14px;top:498.00px;font-size:14.64px;line-height:14.64px;color:#555;transform:scaleX(0.9633);transform-origin:0 0;">0</div>
<div class="a" style="left:1471.14px;top:498.00px;font-size:14.64px;line-height:14.64px;color:#555;transform:scaleX(0.9633);transform-origin:0 0;">0</div>
<div class="a" style="left:1589.69px;top:498.90px;font-size:13.24px;line-height:13.24px;color:#555;transform:scaleX(1.0209);transform-origin:0 0;">Sao Paolo, Brazil</div>
<svg class="b" style="left:1792px;top:496px;" width="15" height="15" viewBox="0 0 15 15"><circle cx="7.5" cy="7.5" r="7.3" fill="#13b594"/></svg>
<div class="b" style="left:248px;top:521px;width:1622px;height:1px;background:#f5f5f6;"></div>
<div class="b" style="left:248px;top:526px;width:1622px;height:1px;background:#e2e3e4;"></div>
<div class="a" style="left:259.59px;top:538.00px;font-size:14.49px;line-height:14.49px;color:#555;transform:scaleX(0.9452);transform-origin:0 0;">status API</div>
<div class="a" style="left:999.94px;top:538.00px;font-size:14.14px;line-height:14.14px;color:#555;transform:scaleX(0.9973);transform-origin:0 0;">01/20/2017</div>
<div class="a" style="left:1128.18px;top:538.00px;font-size:14.64px;line-height:14.64px;color:#555;transform:scaleX(0.9600);transform-origin:0 0;">12:30:07</div>
<div class="a" style="left:1302.14px;top:538.00px;font-size:14.64px;line-height:14.64px;color:#555;transform:scaleX(0.9633);transform-origin:0 0;">0</div>
<div class="a" style="left:1471.25px;top:538.00px;font-size:14.86px;line-height:14.86px;color:#555;transform:scaleX(0.9440);transform-origin:0 0;">1</div>
<div class="a" style="left:1589.69px;top:538.90px;font-size:13.24px;line-height:13.24px;color:#555;transform:scaleX(1.0209);transform-origin:0 0;">Sao Paolo, Brazil</div>
<svg class="b" style="left:1792px;top:536px;" width="15" height="15" viewBox="0 0 15 15"><circle cx="7.5" cy="7.5" r="7.3" fill="#f89a9b"/></svg>
<div class="b" style="left:248px;top:561px;width:1622px;height:1px;background:#f5f5f6;"></div>
<div class="b" style="left:248px;top:566px;width:1622px;height:1px;background:#e2e3e4;"></div>
<div class="a" style="left:259.59px;top:578.00px;font-size:14.49px;line-height:14.49px;color:#555;transform:scaleX(0.9452);transform-origin:0 0;">status API</div>
<div class="a" style="left:999.94px;top:578.00px;font-size:14.14px;line-height:14.14px;color:#555;transform:scaleX(0.9973);transform-origin:0 0;">01/20/2017</div>
<div class="a" style="left:1128.43px;top:578.00px;font-size:14.64px;line-height:14.64px;color:#555;transform:scaleX(0.9600);transform-origin:0 0;">09:30:07</div>
<div class="a" style="left:1302.14px;top:578.00px;font-size:14.64px;line-height:14.64px;color:#555;transform:scaleX(0.9633);transform-origin:0 0;">0</div>
<div class="a" style="left:1471.14px;top:578.00px;font-size:14.64px;line-height:14.64px;color:#555;transform:scaleX(0.9633);transform-origin:0 0;">0</div>
<div class="a" style="left:1589.69px;top:578.90px;font-size:13.24px;line-height:13.24px;color:#555;transform:scaleX(1.0209);transform-origin:0 0;">Sao Paolo, Brazil</div>
<svg class="b" style="left:1792px;top:576px;" width="15" height="15" viewBox="0 0 15 15"><circle cx="7.5" cy="7.5" r="7.3" fill="#13b594"/></svg>
<div class="b" style="left:248px;top:601px;width:1622px;height:1px;background:#f5f5f6;"></div>
<div class="b" style="left:248px;top:606px;width:1622px;height:1px;background:#e2e3e4;"></div>
<div class="a" style="left:259.59px;top:618.00px;font-size:14.49px;line-height:14.49px;color:#555;transform:scaleX(0.9452);transform-origin:0 0;">status API</div>
<div class="a" style="left:999.94px;top:618.00px;font-size:14.14px;line-height:14.14px;color:#555;transform:scaleX(0.9973);transform-origin:0 0;">01/20/2017</div>
<div class="a" style="left:1128.36px;top:618.00px;font-size:14.64px;line-height:14.64px;color:#555;transform:scaleX(0.9600);transform-origin:0 0;">06:30:08</div>
<div class="a" style="left:1302.14px;top:618.00px;font-size:14.64px;line-height:14.64px;color:#555;transform:scaleX(0.9633);transform-origin:0 0;">0</div>
<div class="a" style="left:1471.25px;top:618.00px;font-size:14.86px;line-height:14.86px;color:#555;transform:scaleX(0.9440);transform-origin:0 0;">1</div>
<div class="a" style="left:1589.69px;top:618.90px;font-size:13.24px;line-height:13.24px;color:#555;transform:scaleX(1.0209);transform-origin:0 0;">Sao Paolo, Brazil</div>
<svg class="b" style="left:1792px;top:616px;" width="15" height="15" viewBox="0 0 15 15"><circle cx="7.5" cy="7.5" r="7.3" fill="#f89a9b"/></svg>
<div class="b" style="left:248px;top:641px;width:1622px;height:1px;background:#f5f5f6;"></div>
<div class="b" style="left:248px;top:646px;width:1622px;height:1px;background:#e2e3e4;"></div>
<div class="a" style="left:259.59px;top:658.00px;font-size:14.49px;line-height:14.49px;color:#555;transform:scaleX(0.9452);transform-origin:0 0;">status API</div>
<div class="a" style="left:999.94px;top:658.00px;font-size:14.14px;line-height:14.14px;color:#555;transform:scaleX(0.9973);transform-origin:0 0;">01/20/2017</div>
<div class="a" style="left:1128.39px;top:658.00px;font-size:14.64px;line-height:14.64px;color:#555;transform:scaleX(0.9600);transform-origin:0 0;">03:30:09</div>
<div class="a" style="left:1302.14px;top:658.00px;font-size:14.64px;line-height:14.64px;color:#555;transform:scaleX(0.9633);transform-origin:0 0;">0</div>
<div class="a" style="left:1471.14px;top:658.00px;font-size:14.64px;line-height:14.64px;color:#555;transform:scaleX(0.9633);transform-origin:0 0;">0</div>
<div class="a" style="left:1589.69px;top:658.90px;font-size:13.24px;line-height:13.24px;color:#555;transform:scaleX(1.0209);transform-origin:0 0;">Sao Paolo, Brazil</div>
<svg class="b" style="left:1792px;top:656px;" width="15" height="15" viewBox="0 0 15 15"><circle cx="7.5" cy="7.5" r="7.3" fill="#13b594"/></svg>
<div class="b" style="left:248px;top:681px;width:1622px;height:1px;background:#f5f5f6;"></div>
<div class="b" style="left:248px;top:686px;width:1622px;height:1px;background:#e2e3e4;"></div>
<div class="a" style="left:259.59px;top:698.00px;font-size:14.49px;line-height:14.49px;color:#555;transform:scaleX(0.9452);transform-origin:0 0;">status API</div>
<div class="a" style="left:999.94px;top:698.00px;font-size:14.14px;line-height:14.14px;color:#555;transform:scaleX(0.9973);transform-origin:0 0;">01/20/2017</div>
<div class="a" style="left:1128.39px;top:698.00px;font-size:14.64px;line-height:14.64px;color:#555;transform:scaleX(0.9600);transform-origin:0 0;">00:30:09</div>
<div class="a" style="left:1302.14px;top:698.00px;font-size:14.64px;line-height:14.64px;color:#555;transform:scaleX(0.9633);transform-origin:0 0;">0</div>
<div class="a" style="left:1471.25px;top:698.00px;font-size:14.86px;line-height:14.86px;color:#555;transform:scaleX(0.9440);transform-origin:0 0;">1</div>
<div class="a" style="left:1589.69px;top:698.90px;font-size:13.24px;line-height:13.24px;color:#555;transform:scaleX(1.0209);transform-origin:0 0;">Sao Paolo, Brazil</div>
<svg class="b" style="left:1792px;top:696px;" width="15" height="15" viewBox="0 0 15 15"><circle cx="7.5" cy="7.5" r="7.3" fill="#f89a9b"/></svg>
<div class="b" style="left:248px;top:721px;width:1622px;height:1px;background:#f5f5f6;"></div>
<div class="b" style="left:248px;top:726px;width:1622px;height:1px;background:#e2e3e4;"></div>
<div class="a" style="left:259.59px;top:738.00px;font-size:14.49px;line-height:14.49px;color:#555;transform:scaleX(0.9452);transform-origin:0 0;">status API</div>
<div class="a" style="left:999.94px;top:738.00px;font-size:14.14px;line-height:14.14px;color:#555;transform:scaleX(0.9973);transform-origin:0 0;">01/19/2017</div>
<div class="a" style="left:1128.32px;top:738.00px;font-size:14.64px;line-height:14.64px;color:#555;transform:scaleX(0.9600);transform-origin:0 0;">21:30:06</div>
<div class="a" style="left:1302.14px;top:738.00px;font-size:14.64px;line-height:14.64px;color:#555;transform:scaleX(0.9633);transform-origin:0 0;">0</div>
<div class="a" style="left:1471.14px;top:738.00px;font-size:14.64px;line-height:14.64px;color:#555;transform:scaleX(0.9633);transform-origin:0 0;">0</div>
<div class="a" style="left:1589.69px;top:738.90px;font-size:13.24px;line-height:13.24px;color:#555;transform:scaleX(1.0209);transform-origin:0 0;">Sao Paolo, Brazil</div>
<svg class="b" style="left:1792px;top:736px;" width="15" height="15" viewBox="0 0 15 15"><circle cx="7.5" cy="7.5" r="7.3" fill="#13b594"/></svg>
<div class="b" style="left:248px;top:761px;width:1622px;height:1px;background:#f5f5f6;"></div>
<div class="b" style="left:248px;top:766px;width:1622px;height:1px;background:#e2e3e4;"></div>
<div class="a" style="left:259.59px;top:778.00px;font-size:14.49px;line-height:14.49px;color:#555;transform:scaleX(0.9452);transform-origin:0 0;">status API</div>
<div class="a" style="left:999.94px;top:778.00px;font-size:14.14px;line-height:14.14px;color:#555;transform:scaleX(0.9973);transform-origin:0 0;">01/19/2017</div>
<div class="a" style="left:1128.11px;top:778.00px;font-size:14.64px;line-height:14.64px;color:#555;transform:scaleX(0.9600);transform-origin:0 0;">18:30:10</div>
<div class="a" style="left:1302.14px;top:778.00px;font-size:14.64px;line-height:14.64px;color:#555;transform:scaleX(0.9633);transform-origin:0 0;">0</div>
<div class="a" style="left:1471.25px;top:778.00px;font-size:14.86px;line-height:14.86px;color:#555;transform:scaleX(0.9440);transform-origin:0 0;">1</div>
<div class="a" style="left:1589.69px;top:778.90px;font-size:13.24px;line-height:13.24px;color:#555;transform:scaleX(1.0209);transform-origin:0 0;">Sao Paolo, Brazil</div>
<svg class="b" style="left:1792px;top:776px;" width="15" height="15" viewBox="0 0 15 15"><circle cx="7.5" cy="7.5" r="7.3" fill="#f89a9b"/></svg>
<div class="b" style="left:248px;top:801px;width:1622px;height:1px;background:#f5f5f6;"></div>
<div class="b" style="left:248px;top:806px;width:1622px;height:1px;background:#e2e3e4;"></div>
<div class="a" style="left:259.59px;top:818.00px;font-size:14.49px;line-height:14.49px;color:#555;transform:scaleX(0.9452);transform-origin:0 0;">status API</div>
<div class="a" style="left:999.94px;top:818.00px;font-size:14.14px;line-height:14.14px;color:#555;transform:scaleX(0.9973);transform-origin:0 0;">01/19/2017</div>
<div class="a" style="left:1128.11px;top:818.00px;font-size:14.64px;line-height:14.64px;color:#555;transform:scaleX(0.9600);transform-origin:0 0;">15:30:08</div>
<div class="a" style="left:1302.14px;top:818.00px;font-size:14.64px;line-height:14.64px;color:#555;transform:scaleX(0.9633);transform-origin:0 0;">0</div>
<div class="a" style="left:1471.14px;top:818.00px;font-size:14.64px;line-height:14.64px;color:#555;transform:scaleX(0.9633);transform-origin:0 0;">0</div>
<div class="a" style="left:1589.69px;top:818.90px;font-size:13.24px;line-height:13.24px;color:#555;transform:scaleX(1.0209);transform-origin:0 0;">Sao Paolo, Brazil</div>
<svg class="b" style="left:1792px;top:816px;" width="15" height="15" viewBox="0 0 15 15"><circle cx="7.5" cy="7.5" r="7.3" fill="#13b594"/></svg>
<div class="b" style="left:248px;top:841px;width:1622px;height:1px;background:#f5f5f6;"></div>
<div class="b" style="left:248px;top:846px;width:1622px;height:1px;background:#e2e3e4;"></div>
<div class="a" style="left:260.83px;top:883.60px;font-size:12.00px;line-height:12.00px;color:#7a7a7a;transform:scaleX(1.0083);transform-origin:0 0;">Page 1 / 2</div>
<svg class="b" style="left:1759px;top:866px;" width="48" height="48" viewBox="0 0 48 48"><circle cx="24" cy="24.5" r="22.8" fill="#fff" stroke="#e6e8ea" stroke-width="1.2"/><path d="M16 24.5 L36 24.5" stroke="#86d5c3" stroke-width="2.6"/><path d="M20 20.5 L15 24.5 L20 28.5 Z" fill="#86d5c3"/></svg>
<svg class="b" style="left:1809px;top:866px;" width="48" height="48" viewBox="0 0 48 48"><circle cx="24" cy="24.5" r="22.8" fill="#fff" stroke="#dadcde" stroke-width="1.2"/><path d="M13.5 24.5 L30 24.5" stroke="#16a88b" stroke-width="2.8"/><path d="M28 20.5 L33.5 24.5 L28 28.5 Z" fill="#16a88b"/></svg>
<svg class="b" style="left:700px;top:20px;left:700px;top:20px" width="80" height="115" viewBox="0 0 80 115"><path d="M35.6 9.7 L63.6 59 L50.8 59 L50.8 103 Q50.8 106 47.8 106 L24.4 106 Q21.4 106 21.4 103 L21.4 59 L8.2 59 Z" fill="#ec1c24"/></svg>
</body></html>
